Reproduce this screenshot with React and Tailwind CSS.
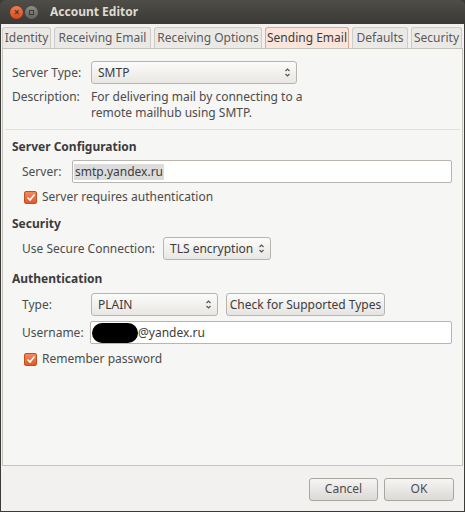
const Spinner = () => (
  <svg width="7" height="11" viewBox="0 0 7 11" className="shrink-0">
    <path d="M1.5 4 L3.5 2 L5.5 4" fill="none" stroke="#555" strokeWidth="1.2" />
    <path d="M1.5 7 L3.5 9 L5.5 7" fill="none" stroke="#555" strokeWidth="1.2" />
  </svg>
);

const Select = ({ value, className }) => (
  <div
    className={`flex items-center justify-between h-[23px] pl-[6px] pr-[5px] rounded-[3px] border border-[#b9b5ae] bg-gradient-to-b from-[#fbfbfa] to-[#e9e7e4] text-[#3c3c3c] ${className}`}
  >
    <span>{value}</span>
    <Spinner />
  </div>
);

const Check = ({ label }) => (
  <div className="flex items-center h-[16px] gap-[5px] pl-[21px]">
    <div className="w-[13px] h-[13px] rounded-[2px] bg-gradient-to-b from-[#f08a5d] to-[#dd5a2a] border border-[#c04f22] flex items-center justify-center">
      <svg width="10" height="9" viewBox="0 0 10 9">
        <path d="M1.5 4.5 L4 7 L8.5 1.5" fill="none" stroke="#fff" strokeWidth="1.6" />
      </svg>
    </div>
    <span>{label}</span>
  </div>
);

const Section = ({ children }) => (
  <div className="h-[16px] font-bold text-[#3c3c3c] pl-[9px]">{children}</div>
);

const tabs = [
  { label: 'Identity', w: 'w-[49px]' },
  { label: 'Receiving Email', w: 'w-[97px]' },
  { label: 'Receiving Options', w: 'w-[108px]' },
  { label: 'Sending Email', w: 'w-[84px]', active: true },
  { label: 'Defaults', w: 'w-[56px]' },
  { label: 'Security', w: 'w-[51px]' },
];

export default function App() {
  return (
    <div
      className="w-[465px] h-[512px] flex flex-col bg-[#3c3b37] text-[12px] leading-[16px] whitespace-nowrap text-[#4c4c4c]"
      style={{ fontFamily: '"Noto Sans", "DejaVu Sans", sans-serif' }}
    >
      {/* title bar */}
      <div className="h-[24px] shrink-0 flex items-center gap-[2px] pl-[10px] rounded-t-[6px] bg-gradient-to-b from-[#4e4d48] to-[#3a3935]">
        <div className="w-[13px] h-[13px] rounded-full bg-gradient-to-b from-[#f47a4b] to-[#d9481a] flex items-center justify-center text-[#3c3b37] text-[10px] font-bold leading-none">
          ×
        </div>
        <div className="w-[13px] h-[13px] rounded-full bg-gradient-to-b from-[#8e8c86] to-[#64625c] flex items-center justify-center">
          <div className="w-[5px] h-[5px] border border-[#3c3b37]" />
        </div>
        <span className="ml-[10px] font-bold text-[#dfdbd2] text-[12px]">Account Editor</span>
      </div>

      {/* body */}
      <div className="flex-1 flex flex-col mx-[1px] mb-[1px] bg-[#f2f1f0]">
        {/* tabs */}
        <div className="flex items-end gap-[3px] pl-[1px] h-[24px] shrink-0">
          {tabs.map((t) => (
            <div
              key={t.label}
              className={`${t.w} h-[21px] flex items-center justify-center overflow-hidden rounded-t-[3px] border border-b-0 ${
                t.active
                  ? 'bg-[#fbe4da] border-[#e8a58a] text-[#3c3c3c]'
                  : 'bg-[#ebe9e6] border-[#cfcbc6] text-[#5a5a5a]'
              }`}
            >
              {t.label}
            </div>
          ))}
        </div>

        {/* panel */}
        <div className="h-[418px] shrink-0 mx-[1px] border border-[#c6c2bc] bg-[#f6f6f5] flex flex-col pt-[12px]">
          <div className="flex items-center pl-[9px]">
            <span className="w-[79px]">Server Type:</span>
            <Select value="SMTP" className="w-[206px]" />
          </div>
          <div className="flex pl-[9px] mt-[5px]">
            <span className="w-[79px]">Description:</span>
            <span>
              For delivering mail by connecting to a
              <br />
              remote mailhub using SMTP.
            </span>
          </div>
          <div className="h-px bg-[#e2e0dd] mt-[8px] mx-[2px]" />

          <div className="mt-[9px]">
            <Section>Server Configuration</Section>
          </div>
          <div className="flex items-center pl-[19px] mt-[5px]">
            <span className="w-[50px]">Server:</span>
            <div className="flex-1 mr-[10px] h-[23px] flex items-center px-[1px] border border-[#b9b5ae] rounded-[2px] bg-white text-[#3c3c3c]">
              <span className="bg-[#dcdcdc] px-[1px]">smtp.yandex.ru</span>
            </div>
          </div>
          <div className="mt-[6px]">
            <Check label="Server requires authentication" />
          </div>

          <div className="mt-[11px]">
            <Section>Security</Section>
          </div>
          <div className="flex items-center pl-[19px] mt-[5px]">
            <span className="w-[141px]">Use Secure Connection:</span>
            <Select value="TLS encryption" className="w-[108px]" />
          </div>

          <div className="mt-[11px]">
            <Section>Authentication</Section>
          </div>
          <div className="flex items-center pl-[19px] mt-[6px] gap-[8px]">
            <span className="w-[61px]">Type:</span>
            <Select value="PLAIN" className="w-[127px]" />
            <div className="w-[159px] h-[23px] flex items-center justify-center rounded-[3px] border border-[#b9b5ae] bg-gradient-to-b from-[#fbfbfa] to-[#e6e4e1] text-[#3c3c3c]">
              Check for Supported Types
            </div>
          </div>
          <div className="flex items-center pl-[19px] mt-[5px]">
            <span className="w-[68px]">Username:</span>
            <div className="flex-1 mr-[10px] h-[23px] flex items-center pl-[1px] border border-[#b9b5ae] rounded-[2px] bg-white text-[#3c3c3c]">
              <span className="w-[46px] h-[20px] rounded-full bg-black" />
              <span>@yandex.ru</span>
            </div>
          </div>
          <div className="mt-[7px]">
            <Check label="Remember password" />
          </div>
        </div>

        {/* buttons */}
        <div className="flex-1 flex items-center justify-end gap-[6px] pr-[10px] pt-[1px]">
          <div className="w-[69px] h-[23px] flex items-center justify-center rounded-[3px] border border-[#aaa6a0] bg-gradient-to-b from-[#f6f5f4] to-[#dcdad6] text-[#4c4c4c]">
            Cancel
          </div>
          <div className="w-[70px] h-[23px] flex items-center justify-center rounded-[3px] border border-[#aaa6a0] bg-gradient-to-b from-[#f6f5f4] to-[#dcdad6] text-[#4c4c4c]">
            OK
          </div>
        </div>
      </div>
    </div>
  );
}
